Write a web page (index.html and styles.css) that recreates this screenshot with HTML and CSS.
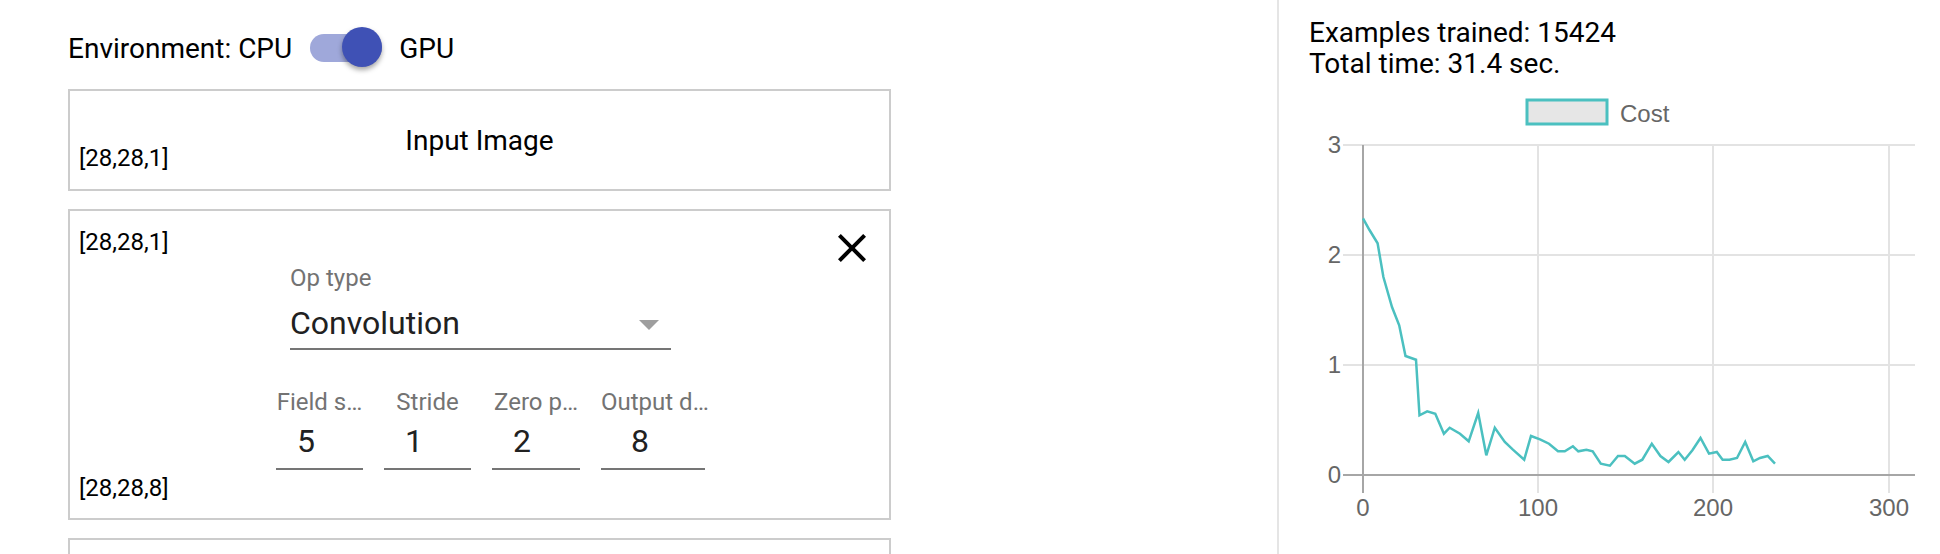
FILE: index.html
```html
<!DOCTYPE html>
<html lang="en">
<head>
<meta charset="utf-8">
<title>Model builder</title>
<link rel="stylesheet" href="styles.css">
</head>
<body>
<div class="page">
  <div class="left">
    <div class="env-row">
      <span class="env-label">Environment: CPU</span>
      <div class="toggle" role="switch" aria-checked="true">
        <div class="toggle-track"></div>
        <div class="toggle-thumb"></div>
      </div>
      <span class="env-label">GPU</span>
    </div>

    <div class="layer layer-input">
      <div class="layer-title">Input Image</div>
      <div class="shape shape-bottom">[28,28,1]</div>
    </div>

    <div class="layer layer-op">
      <button class="close-btn" aria-label="Remove layer">
        <svg viewBox="0 0 24 24" width="48" height="48"><path d="M19 6.41L17.59 5 12 10.59 6.41 5 5 6.41 10.59 12 5 17.59 6.41 19 12 13.41 17.59 19 19 17.59 13.41 12z"/></svg>
      </button>
      <div class="shape">[28,28,1]</div>
      <div class="dropdown">
        <div class="field-label">Op type</div>
        <div class="select-row">
          <span class="select-value">Convolution</span>
          <span class="select-arrow"></span>
        </div>
      </div>
      <div class="params">
        <div class="param p1" title="Field size">
          <div class="field-label param-label">Field s…</div>
          <div class="param-value">5</div>
        </div>
        <div class="param p2" title="Stride">
          <div class="field-label param-label">Stride</div>
          <div class="param-value">1</div>
        </div>
        <div class="param p3" title="Zero pad">
          <div class="field-label param-label">Zero p…</div>
          <div class="param-value">2</div>
        </div>
        <div class="param p4" title="Output depth">
          <div class="field-label param-label">Output d…</div>
          <div class="param-value">8</div>
        </div>
      </div>
      <div class="shape shape-out">[28,28,8]</div>
    </div>

    <div class="layer layer-next"></div>
  </div>

  <div class="right">
    <div class="stats">
      <div>Examples trained: 15424</div>
      <div>Total time: 31.4 sec.</div>
    </div>
    <svg class="chart" viewBox="1309 90 631 464" width="631" height="464">
      <rect class="legend-box" x="1527" y="100" width="80" height="24"/>
      <text class="legend-text" x="1620" y="122">Cost</text>

      <g class="grid">
        <line x1="1343" y1="145" x2="1915" y2="145"/>
        <line x1="1343" y1="255" x2="1915" y2="255"/>
        <line x1="1343" y1="365" x2="1915" y2="365"/>
        <line x1="1538" y1="145" x2="1538" y2="493"/>
        <line x1="1713" y1="145" x2="1713" y2="493"/>
        <line x1="1889" y1="145" x2="1889" y2="493"/>
      </g>
      <g class="axis">
        <line x1="1343" y1="475" x2="1915" y2="475"/>
        <line x1="1363" y1="145" x2="1363" y2="493"/>
      </g>

      <g class="tick-y">
        <text x="1341" y="153">3</text>
        <text x="1341" y="263">2</text>
        <text x="1341" y="373">1</text>
        <text x="1341" y="483">0</text>
      </g>
      <g class="tick-x">
        <text x="1363" y="516">0</text>
        <text x="1538" y="516">100</text>
        <text x="1713" y="516">200</text>
        <text x="1889" y="516">300</text>
      </g>

      <polyline class="cost-line" points="1363,218.3 1369.5,230 1377.6,243.3 1383.4,277 1392,307 1399.2,325.3 1405.5,356 1416,359.7 1419.5,415.3 1427.2,411.3 1435.3,413.7 1443.9,433.7 1449.7,427.7 1460,433.7 1468.7,441.3 1478.2,413 1486.3,455.3 1494.8,427.7 1504.8,442 1512.9,449.7 1524.2,459.7 1531,436 1540,439.3 1549,443.7 1558,451.3 1564.8,451.3 1572.9,446.3 1578.3,451.3 1586.4,449.7 1592.7,451.3 1600.8,463.7 1609.9,465.7 1618,456 1624.8,456 1634.7,463.7 1642.3,459.7 1651.8,443.7 1660.4,456 1668.5,462 1678.4,452 1684.7,459.7 1692.4,450.3 1700.5,438 1709,453.7 1716.8,452 1722.6,459.7 1729.4,459.7 1737,458 1745.2,442 1753.3,461.3 1760,458 1767.7,456 1775,463.7"/>
    </svg>
  </div>
</div>
</body>
</html>
```

FILE: styles.css
```css
* { box-sizing: border-box; }

html, body {
  margin: 0;
  padding: 0;
  background: #ffffff;
}

body {
  font-family: Roboto, "Noto Sans", "Liberation Sans", sans-serif;
  color: #000000;
  overflow: hidden;
}

.page {
  display: flex;
  width: 1940px;
  height: 554px;
  overflow: hidden;
}

/* ---------- left column ---------- */
.left {
  flex: 0 0 1277px;
  padding-left: 68px;
}

.env-row {
  display: flex;
  align-items: center;
  height: 40px;
  margin: 28px 0 21px;
}

.env-label {
  font-size: 28px;
  line-height: 33px;
}

.toggle {
  position: relative;
  flex: 0 0 72px;
  height: 40px;
  margin: 0 17px 0 18px;
}

.toggle-track {
  position: absolute;
  left: 0;
  top: 6px;
  width: 72px;
  height: 28px;
  border-radius: 14px;
  background: #9fa8da;
}

.toggle-thumb {
  position: absolute;
  right: 0;
  top: -1px;
  width: 40px;
  height: 40px;
  border-radius: 50%;
  background: #3f51b5;
  box-shadow: 0 3px 5px rgba(0, 0, 0, 0.35);
}

.layer {
  width: 823px;
  border: 2px solid #cccccc;
  background: #ffffff;
}

.shape {
  font-size: 24px;
  line-height: 28px;
  white-space: nowrap;
}

.layer-input {
  height: 102px;
  padding: 0 9px 17px;
  display: grid;
  grid-template-columns: 1fr;
  grid-template-rows: 1fr;
}

.layer-input > * {
  grid-area: 1 / 1;
}

.layer-title {
  justify-self: center;
  align-self: start;
  margin-top: 33px;
  font-size: 28px;
  line-height: 33px;
}

.shape-bottom {
  justify-self: start;
  align-self: end;
}

.layer-op {
  position: relative;
  margin-top: 18px;
  padding: 17px 9px 16px;
}

.close-btn {
  position: absolute;
  top: 13px;
  right: 13px;
  width: 48px;
  height: 48px;
  padding: 0;
  border: 0;
  background: transparent;
}

.close-btn svg {
  display: block;
  fill: #000000;
}

.dropdown {
  width: 381px;
  margin: 8px 0 0 211px;
  border-bottom: 2px solid #757575;
}

.field-label {
  font-size: 24px;
  line-height: 28px;
  color: #737373;
  white-space: nowrap;
}

.param-label {
  text-align: center;
}

.select-row {
  display: flex;
  align-items: flex-start;
  justify-content: space-between;
  margin-top: 12px;
  padding-bottom: 6px;
}

.select-value {
  font-size: 32px;
  line-height: 38px;
  color: #212121;
}

.select-arrow {
  width: 0;
  height: 0;
  margin: 16px 12px 0 0;
  border-left: 10px solid transparent;
  border-right: 10px solid transparent;
  border-top: 10px solid #9e9e9e;
}

.params {
  display: flex;
  gap: 21px;
  margin: 38px 0 0 197px;
}

.param {
  flex: 0 0 auto;
}

.p1, .p2 { width: 87px; }
.p3 { width: 88px; }
.p4 { width: 104px; }

.param-value {
  margin-top: 6px;
  padding: 0 0 8px 21px;
  font-size: 32px;
  line-height: 38px;
  color: #212121;
  border-bottom: 2px solid #757575;
}

.p4 .param-value {
  padding-left: 30px;
}

.shape-out {
  margin-top: 4px;
}

.layer-next {
  height: 100px;
  margin-top: 18px;
}

/* ---------- right panel ---------- */
.right {
  flex: 0 0 663px;
  height: 554px;
  border-left: 2px solid #e5e5e5;
  padding-left: 30px;
}

.stats {
  margin-top: 17px;
  font-size: 28px;
  line-height: 31px;
  white-space: nowrap;
}

.chart {
  display: block;
  margin-top: 11px;
  font-family: "Liberation Sans", Arial, sans-serif;
  font-size: 24px;
}

.legend-box {
  fill: #e6e6e6;
  stroke: #4bc0c0;
  stroke-width: 3;
}

.legend-text {
  fill: #666666;
}

.grid line {
  stroke: #e3e3e3;
  stroke-width: 2;
}

.axis line {
  stroke: #a6a6a6;
  stroke-width: 2;
}

.tick-y text {
  fill: #666666;
  text-anchor: end;
}

.tick-x text {
  fill: #666666;
  text-anchor: middle;
}

.cost-line {
  fill: none;
  stroke: #4bc0c0;
  stroke-width: 2.5;
  stroke-linejoin: miter;
}
```
